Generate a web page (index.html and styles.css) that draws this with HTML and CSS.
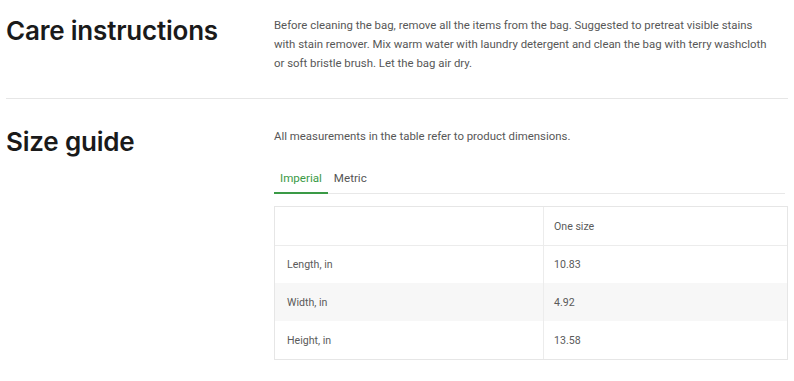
FILE: index.html
```html
<!DOCTYPE html>
<html>
<head>
<meta charset="utf-8">
<link rel="stylesheet" href="styles.css">
</head>
<body>
<div class="page">
  <section class="section care">
    <h2 class="title">Care instructions</h2>
    <div class="content">
      <p class="text">Before cleaning the bag, remove all the items from the bag. Suggested to pretreat visible stains with stain remover. Mix warm water with laundry detergent and clean the bag with terry washcloth or soft bristle brush. Let the bag air dry.</p>
    </div>
  </section>
  <section class="section size">
    <h2 class="title">Size guide</h2>
    <div class="content">
      <p class="text">All measurements in the table refer to product dimensions.</p>
      <div class="tabs">
        <span class="tab active">Imperial</span>
        <span class="tab">Metric</span>
      </div>
      <div class="table">
        <div class="row head"><div class="cell"></div><div class="cell">One size</div></div>
        <div class="row"><div class="cell">Length, in</div><div class="cell">10.83</div></div>
        <div class="row alt"><div class="cell">Width, in</div><div class="cell">4.92</div></div>
        <div class="row"><div class="cell">Height, in</div><div class="cell">13.58</div></div>
      </div>
    </div>
  </section>
</div>
</body>
</html>
```

FILE: styles.css
```css
* { box-sizing: border-box; }
html, body { margin: 0; padding: 0; background: #fff; }
.page { padding: 0 6px 0 6px; }
.section { display: flex; }
.care { padding: 8px 0 25px; border-bottom: 1px solid #e6e6e6; }
.size { padding-top: 20px; }
.title {
  margin: 0;
  padding-top: 5px;
  width: 268px;
  flex: none;
  font-family: Inter, "Noto Sans", sans-serif;
  font-weight: 600;
  font-size: 26px;
  letter-spacing: -0.2px;
  line-height: 36px;
  color: #1a1a1a;
}
.content { flex: 1; }
.text {
  margin: 0;
  max-width: 500px;
  font-family: Roboto, sans-serif;
  font-size: 11.4px;
  line-height: 19px;
  color: #575757;
  padding-top: 8px;
}
.tabs {
  margin-top: 21px;
  display: flex;
  border-bottom: 1px solid #e8e8e8;
  margin-right: 3px;
}
.tab {
  font-family: Roboto, sans-serif;
  font-size: 11.6px;
  line-height: 14px;
  color: #555;
  padding: 4px 6px 8px;
}
.tab.active { color: #3a9a46; border-bottom: 2px solid #3a9a46; margin-bottom: -1px; padding-bottom: 7px; }
.table {
  margin-top: 12px;
  border: 1px solid #e6e6e6;
  font-family: Roboto, sans-serif;
  font-size: 10.6px;
  color: #5a5a5a;
}
.row { display: grid; grid-template-columns: 268px 1fr; height: 38px; border-top: 1px solid #ececec; }
.row.head { border-top: none; }
.row.alt { background: #f7f7f7; border-top: none; }
.row.alt + .row { border-top: none; }
.cell { display: flex; align-items: center; padding-left: 12px; }
.cell + .cell { border-left: 1px solid #ececec; padding-left: 10px; }
```
